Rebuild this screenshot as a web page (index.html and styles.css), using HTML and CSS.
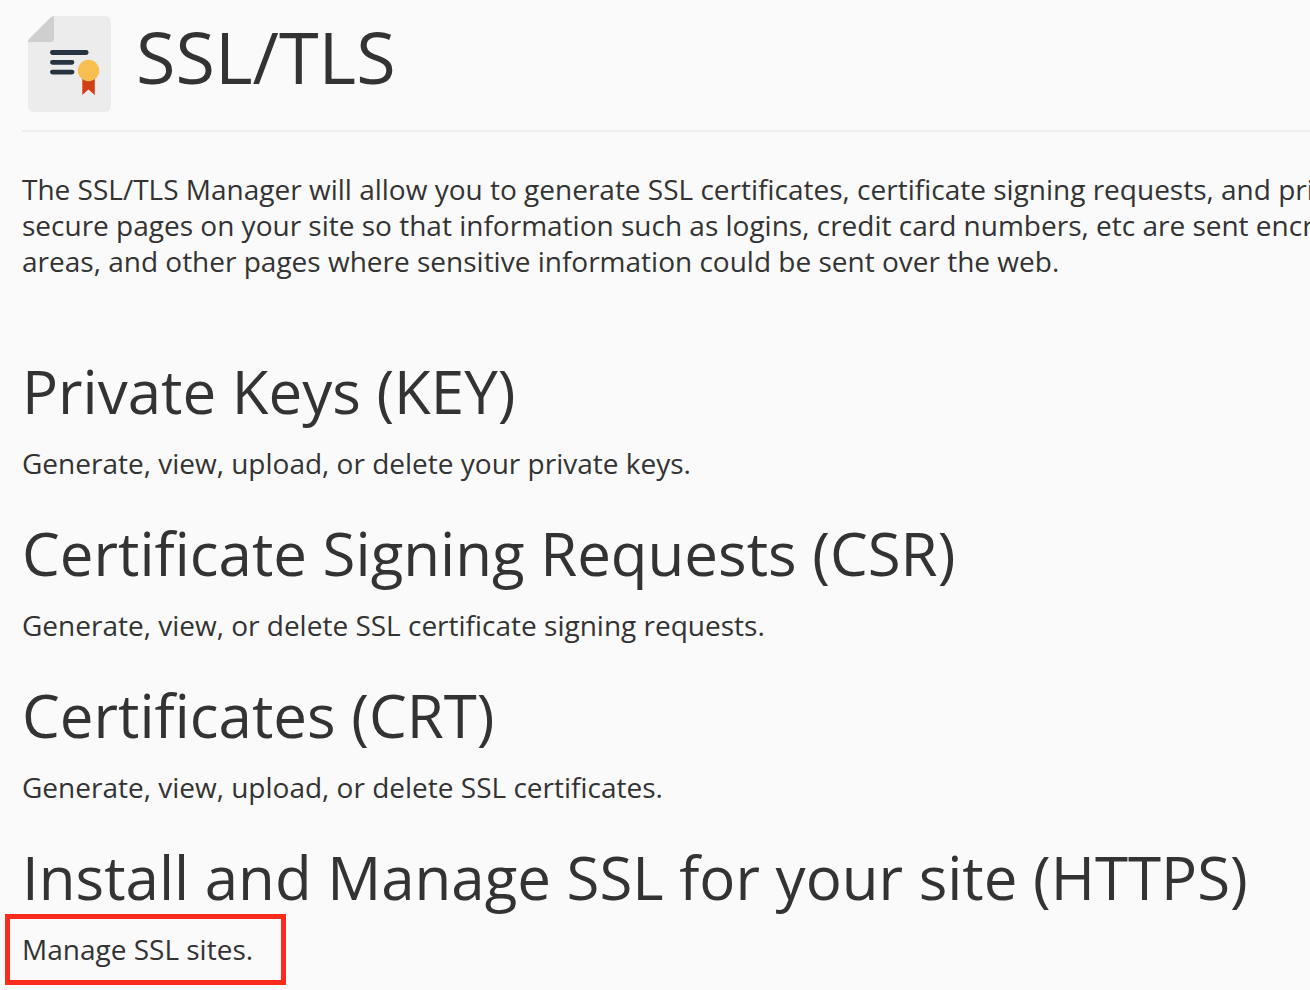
FILE: index.html
```html
<!DOCTYPE html>
<html lang="en">
<head>
<meta charset="utf-8">
<title>SSL/TLS</title>
<link rel="stylesheet" href="styles.css">
</head>
<body>
<main class="page">
  <header class="page-header">
    <svg class="page-icon" viewBox="0 0 83 96" aria-hidden="true">
      <path fill="#ececec" d="M26 0H77a6 6 0 0 1 6 6V90a6 6 0 0 1-6 6H6a6 6 0 0 1-6-6V24L24 1z"/>
      <path fill="#cfcfcf" d="M26 0V23a3 3 0 0 1-3 3H0q0-2 2-4L22 2q2-2 4-2z"/>
      <path stroke="#263541" stroke-width="4.800" stroke-linecap="round" d="M24.400 36.500H58.200M24.400 46.300H44M24.400 56.100H44"/>
      <path fill="#d23f15" d="M54.300 62H66.800V79L60.500 73.500L54.300 79z"/>
      <circle fill="#f7bf50" cx="60.600" cy="54.500" r="10.700"/>
    </svg>
    <h1 class="page-title">SSL/TLS</h1>
  </header>
  <p class="intro">The SSL/TLS Manager will allow you to generate SSL certificates, certificate signing requests, and pri<br>
  secure pages on your site so that information such as logins, credit card numbers, etc are sent encr<br>
  areas, and other pages where sensitive information could be sent over the web.</p>
  <section class="group">
    <h2 class="group-title">Private Keys (KEY)</h2>
    <a class="group-link" href="#keys">Generate, view, upload, or delete your private keys.</a>
  </section>
  <section class="group">
    <h2 class="group-title">Certificate Signing Requests (CSR)</h2>
    <a class="group-link" href="#csr">Generate, view, or delete SSL certificate signing requests.</a>
  </section>
  <section class="group">
    <h2 class="group-title">Certificates (CRT)</h2>
    <a class="group-link" href="#crt">Generate, view, upload, or delete SSL certificates.</a>
  </section>
  <section class="group">
    <h2 class="group-title">Install and Manage SSL for your site (HTTPS)</h2>
    <a class="group-link group-link-marked" href="#sites">Manage SSL sites.</a>
  </section>
</main>
</body>
</html>
```
FILE: styles.css
```css
* { box-sizing: border-box; }
body {
  margin: 0;
  overflow: hidden;
  background: #fafafa;
  color: #333;
  font-family: "Open Sans", "Noto Sans", sans-serif;
  font-size: 28px;
  line-height: 36px;
}
.page { padding: 16px 0 0 22px; }
.page-header {
  display: flex;
  gap: 25px;
  height: 116px;
  padding-left: 6px;
  border-bottom: 2px solid #eee;
}
.page-icon { flex: none; width: 83px; height: 96px; fill: none; }
.page-title { margin: 0; font-size: 72px; font-weight: 400; line-height: 80px; }
.intro { margin: 39px 0 73px; white-space: nowrap; }
.group { margin-bottom: 33px; }
.group-title {
  margin: 0 0 15px;
  font-size: 60px;
  font-weight: 400;
  line-height: 78px;
  white-space: nowrap;
}
.group-link { display: block; width: max-content; color: inherit; text-decoration: none; }
.group-link-marked {
  margin: -17px 0 0 -17px;
  padding: 12px 28px 13px 12px;
  border: 5px solid #fb2b1d;
}
```
